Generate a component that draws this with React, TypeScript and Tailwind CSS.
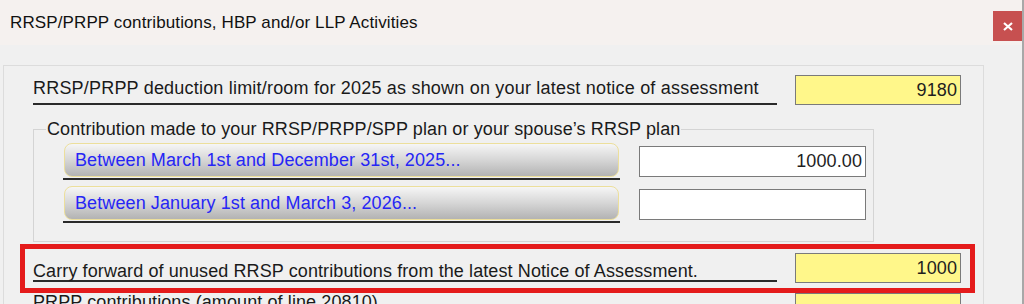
import React from 'react'

const font = { fontFamily: '"Liberation Sans", Arial, sans-serif' }

const YellowBox = ({ value }: { value?: string }) => (
  <div className="w-[166px] h-[30px] shrink-0 border border-[#7a7a7a] bg-[#fff78a] text-right pr-[3px] text-[18px] leading-[28px] text-[#1e1e1e]">
    {value}
  </div>
)

const PeriodButton = ({ label, value }: { label: string; value?: string }) => (
  <div className="flex items-center gap-[19px]">
    <div className="w-[557px] border-b-2 border-[#2a2a2a] pb-[1px]">
      <div className="ml-[1px] h-[34px] w-[555px] rounded-[8px] border border-[#ecdf9c] bg-gradient-to-b from-[#f6f6f6] via-[#d6d6d6] to-[#b3b3b3] pl-[10px] leading-[32px] text-[#2626f5]">
        {label}
      </div>
    </div>
    <div className="w-[227px] h-[31px] border border-[#7a7a7a] bg-white text-right pr-[3px] leading-[29px] text-[#1e1e1e]">
      {value}
    </div>
  </div>
)

export default function App() {
  return (
    <div className="w-[1024px] h-[304px] overflow-hidden bg-[#f0f0f0] flex" style={font}>
      <div className="flex-1 flex flex-col">
        {/* title bar */}
        <div className="h-[45px] shrink-0 bg-[#f5f1ef] flex items-start justify-between">
          <div className="pl-[10px] pt-[10px] text-[17px] tracking-[0.12px] text-[#111]">RRSP/PRPP contributions, HBP and/or LLP Activities</div>
          <div className="mt-[11px] w-[29px] h-[30px] bg-[#c75050] flex items-center justify-center">
            <svg width="10" height="9" viewBox="0 0 10 9">
              <path d="M1 1 L9 8 M9 1 L1 8" stroke="white" strokeWidth="2.2" />
            </svg>
          </div>
        </div>

        {/* body */}
        <div className="ml-[3px] mt-[20px] w-[981px] shrink-0 border border-b-0 border-[#dcdcdc] pt-[9px] pl-[29px] text-[18px] tracking-[0.1px]">
          <div className="flex items-start gap-[18px]">
            <div className="w-[744px] h-[30px] border-b-2 border-[#2a2a2a] leading-[26px] tracking-[0.2px] text-[#1a1a1a]">
              RRSP/PRPP deduction limit/room for 2025 as shown on your latest notice of assessment
            </div>
            <YellowBox value="9180" />
          </div>

          <div className="relative mt-[24px] w-[841px] h-[113px] border border-[#d4d4d4] pt-[13px] pl-[29px]">
            <span className="absolute left-[12px] top-[-11px] bg-[#f0f0f0] px-[1px] leading-[20px] text-[#1a1a1a]">
              Contribution made to your RRSP/PRPP/SPP plan or your spouse’s RRSP plan
            </span>
            <PeriodButton label="Between March 1st and December 31st, 2025..." value="1000.00" />
            <div className="mt-[6px]">
              <PeriodButton label="Between January 1st and March 3, 2026..." />
            </div>
          </div>

          <div className="-ml-[13px] mt-[2px] w-[955px] border-[5px] border-[#e41b1b] pt-[4px] pb-[5px] pl-[8px] flex items-start gap-[18px]">
            <div className="w-[744px] h-[29px] border-b-2 border-[#2a2a2a] leading-[36px] text-[#1a1a1a]">
              Carry forward of unused RRSP contributions from the latest Notice of Assessment.
            </div>
            <YellowBox value="1000" />
          </div>

          <div className="flex items-start gap-[18px]">
            <div className="w-[744px] h-[30px] leading-[14px] text-[#1a1a1a] pt-[2px]">
              PRPP contributions (amount of line 20810)
            </div>
            <YellowBox />
          </div>
        </div>
      </div>
      <div className="w-[2px] shrink-0 bg-[#a8a8a8]" />
    </div>
  )
}
